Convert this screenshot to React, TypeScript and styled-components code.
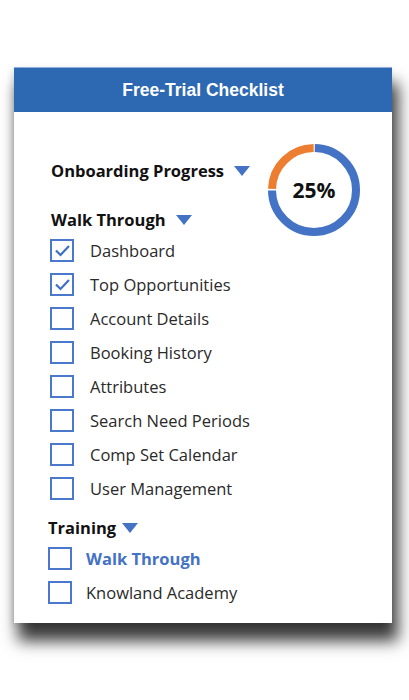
import React from "react";
import styled, { createGlobalStyle } from "styled-components";

const Global = createGlobalStyle`
  html, body { margin: 0; padding: 0; background: #ffffff; }
  body { font-family: "Open Sans", "Noto Sans", sans-serif; }
`;

const Page = styled.div`
  width: 409px;
  height: 700px;
  padding: 67px 0 0 14px;
  box-sizing: border-box;
`;

const Card = styled.div`
  width: 378px;
  background: #ffffff;
  box-shadow: 5px 17px 15px 1px rgba(0, 0, 0, 0.78), -2px 2px 6px rgba(0, 0, 0, 0.12);
`;

const Header = styled.div`
  height: 45px;
  background: #2d69b2;
  border-top: 1px solid #8fb0dc;
  box-sizing: border-box;
  display: flex;
  align-items: center;
  justify-content: center;
  color: #ffffff;
  font-family: "Liberation Sans", Arial, sans-serif;
  font-weight: bold;
  font-size: 17.5px;
`;

const Body = styled.div`
  padding: 32px 32px 14px 36px;
`;

const TopGrid = styled.div`
  display: grid;
  grid-template-columns: 1fr auto;
  grid-template-rows: 38px 51px;
`;

const Heading = styled.div<{ $top: number; $indent?: number; $gap?: number }>`
  display: flex;
  align-items: center;
  gap: ${(p) => p.$gap ?? 10}px;
  height: 24px;
  margin-top: ${(p) => p.$top}px;
  margin-left: ${(p) => p.$indent ?? 0}px;
  font-size: 16.5px;
  font-weight: 700;
  color: #111111;
`;

const Caret = styled.span`
  width: 0;
  height: 0;
  border-left: 8.5px solid transparent;
  border-right: 8.5px solid transparent;
  border-top: 10px solid #4472c4;
  margin-top: 2px;
`;

const DonutWrap = styled.div`
  grid-column: 2;
  grid-row: 1 / span 2;
  position: relative;
  width: 92px;
  height: 92px;
  align-self: start;
`;

const DonutLabel = styled.div`
  position: absolute;
  inset: 0;
  display: flex;
  align-items: center;
  justify-content: center;
  font-size: 21px;
  font-weight: 700;
  color: #111111;
`;

const List = styled.div<{ $indent?: number }>`
  display: flex;
  flex-direction: column;
  margin-left: ${(p) => p.$indent ?? 0}px;
`;

const Row = styled.div<{ $top?: number; $gap?: number }>`
  height: 34px;
  display: flex;
  align-items: center;
  gap: ${(p) => p.$gap ?? 16}px;
  margin-top: ${(p) => p.$top ?? 0}px;
`;

const Box = styled.span`
  width: 24px;
  height: 23px;
  box-sizing: border-box;
  border: 2.5px solid #4a78cc;
  display: flex;
  align-items: center;
  justify-content: center;
  flex: none;
`;

const Label = styled.span<{ $link?: boolean }>`
  font-size: 16.5px;
  color: ${(p) => (p.$link ? "#4472c4" : "#2a2a2a")};
  font-weight: ${(p) => (p.$link ? 700 : 400)};
`;

const Check = () => (
  <svg width="17" height="15" viewBox="0 0 17 15">
    <polyline points="2,7.5 6.5,12 15,3" fill="none" stroke="#3f6fc6" strokeWidth="2.2" />
  </svg>
);

const Donut = () => {
  const r = 42;
  const c = 2 * Math.PI * r;
  const gap = 1.6;
  const blue = c * 0.75 - gap;
  const orange = c * 0.25 - gap;
  return (
    <svg width="92" height="92" viewBox="0 0 92 92">
      <g transform="rotate(-90 46 46)">
        <circle
          cx="46"
          cy="46"
          r={r}
          fill="none"
          stroke="#4472c4"
          strokeWidth="8"
          strokeDasharray={`${blue} ${c}`}
          strokeDashoffset={-gap / 2}
        />
        <circle
          cx="46"
          cy="46"
          r={r}
          fill="none"
          stroke="#ed7d31"
          strokeWidth="8"
          strokeDasharray={`${orange} ${c}`}
          strokeDashoffset={-(c * 0.75 + gap / 2)}
        />
      </g>
    </svg>
  );
};

const walk = [
  { label: "Dashboard", done: true },
  { label: "Top Opportunities", done: true },
  { label: "Account Details", done: false },
  { label: "Booking History", done: false },
  { label: "Attributes", done: false },
  { label: "Search Need Periods", done: false },
  { label: "Comp Set Calendar", done: false },
  { label: "User Management", done: false },
];

export default function App() {
  return (
    <>
      <Global />
      <Page>
        <Card>
          <Header>Free-Trial Checklist</Header>
          <Body>
            <TopGrid>
              <Heading $top={14} $indent={1}>
                Onboarding Progress <Caret />
              </Heading>
              <Heading $top={25} $indent={1}>
                Walk Through <Caret />
              </Heading>
              <DonutWrap>
                <Donut />
                <DonutLabel>25%</DonutLabel>
              </DonutWrap>
            </TopGrid>
            <List>
              {walk.map((w) => (
                <Row key={w.label}>
                  <Box>{w.done && <Check />}</Box>
                  <Label>{w.label}</Label>
                </Row>
              ))}
            </List>
            <Heading $top={10} $indent={-2} $gap={6}>
              Training <Caret />
            </Heading>
            <List $indent={-2}>
              <Row $top={2} $gap={14}>
                <Box />
                <Label $link>Walk Through</Label>
              </Row>
              <Row $gap={14}>
                <Box />
                <Label>Knowland Academy</Label>
              </Row>
            </List>
          </Body>
        </Card>
      </Page>
    </>
  );
}
